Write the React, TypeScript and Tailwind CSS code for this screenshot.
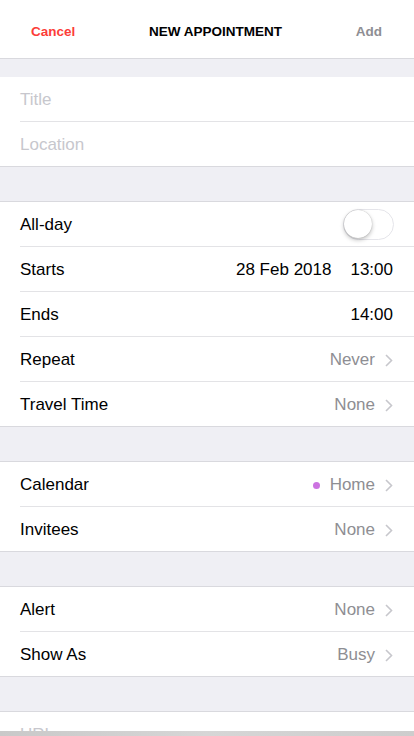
import React from "react";

function Chevron() {
  return (
    <svg width="8" height="13" viewBox="0 0 8 13" className="ml-[10px] shrink-0">
      <path d="M1 1l5.5 5.5L1 12" fill="none" stroke="#c7c7cc" strokeWidth="1.6" />
    </svg>
  );
}

function Row({
  label,
  value,
  chevron,
  dot,
  last,
  dark,
  children,
}: {
  label: string;
  value?: string;
  chevron?: boolean;
  dot?: boolean;
  last?: boolean;
  dark?: boolean;
  children?: React.ReactNode;
}) {
  return (
    <div className="pl-5">
      <div
        className={
          "flex items-center pr-[21px] pt-[2px] " +
          (last ? "h-[44px]" : "h-[45px] border-b border-[#e3e3e6]")
        }
      >
        <span className="text-[17px] text-black flex-1">{label}</span>
        {children}
        {dot && <span className="w-[7px] h-[7px] rounded-full bg-[#cc73e1] mr-[10px]" />}
        {value && (
          <span className={"text-[17px] " + (dark ? "text-black" : "text-[#8e8e93]")}>{value}</span>
        )}
        {chevron && <Chevron />}
      </div>
    </div>
  );
}

function Section({ children }: { children: React.ReactNode }) {
  return <div className="bg-white border-y border-[#d9d9de] shrink-0">{children}</div>;
}

export default function App() {
  return (
    <div
      className="relative w-[414px] h-[736px] overflow-hidden bg-[#efeff4] flex flex-col"
      style={{ fontFamily: '"Liberation Sans", Arial, sans-serif' }}
    >
      <div className="h-[59px] shrink-0 bg-white border-b border-[#d9d9de] flex items-center justify-between pl-[31px] pr-[32px] pt-[6px]">
        <span className="text-[13.5px] font-bold text-[#fc3d39]">Cancel</span>
        <span className="text-[13.5px] font-bold text-black">NEW APPOINTMENT</span>
        <span className="text-[13.5px] font-bold text-[#8e8e93]">Add</span>
      </div>

      <div className="h-[18px] shrink-0" />
      <div className="bg-white border-b border-[#d9d9de] shrink-0">
        <div className="pl-5">
          <div className="h-[45px] flex items-center pt-[2px] border-b border-[#e3e3e6] text-[17px] text-[#c7c7cd]">
            Title
          </div>
        </div>
        <div className="h-[44px] flex items-center pt-[2px] pl-5 text-[17px] text-[#c7c7cd]">Location</div>
      </div>

      <div className="h-[34px] shrink-0" />
      <Section>
        <Row label="All-day">
          <div className="w-[51px] h-[31px] rounded-full border border-[#e5e5ea] bg-white relative -mr-[1px] -mt-[2px]">
            <div className="absolute left-0 top-[0.5px] w-[28px] h-[28px] rounded-full bg-white shadow-[0_2px_4px_rgba(0,0,0,0.25),0_0_1px_rgba(0,0,0,0.3)]" />
          </div>
        </Row>
        <Row label="Starts">
          <span className="text-[17px] text-black">28 Feb 2018</span>
          <span className="text-[17px] text-black ml-[19px]">13:00</span>
        </Row>
        <Row label="Ends" value="14:00" dark />
        <Row label="Repeat" value="Never" chevron />
        <Row label="Travel Time" value="None" chevron last />
      </Section>

      <div className="h-[34px] shrink-0" />
      <Section>
        <Row label="Calendar" value="Home" chevron dot />
        <Row label="Invitees" value="None" chevron last />
      </Section>

      <div className="h-[34px] shrink-0" />
      <Section>
        <Row label="Alert" value="None" chevron />
        <Row label="Show As" value="Busy" chevron last />
      </Section>

      <div className="h-[34px] shrink-0" />
      <div className="bg-white border-t border-[#d9d9de] shrink-0">
        <div className="h-[44px] flex items-center pt-[2px] pl-5 text-[17px] text-[#c7c7cd]">URL</div>
      </div>

      <div className="absolute bottom-0 left-0 right-0 h-[5px] bg-gradient-to-r from-[#c9c9c9] via-[#d6d6d6] to-[#cdcdcd]" />
    </div>
  );
}
